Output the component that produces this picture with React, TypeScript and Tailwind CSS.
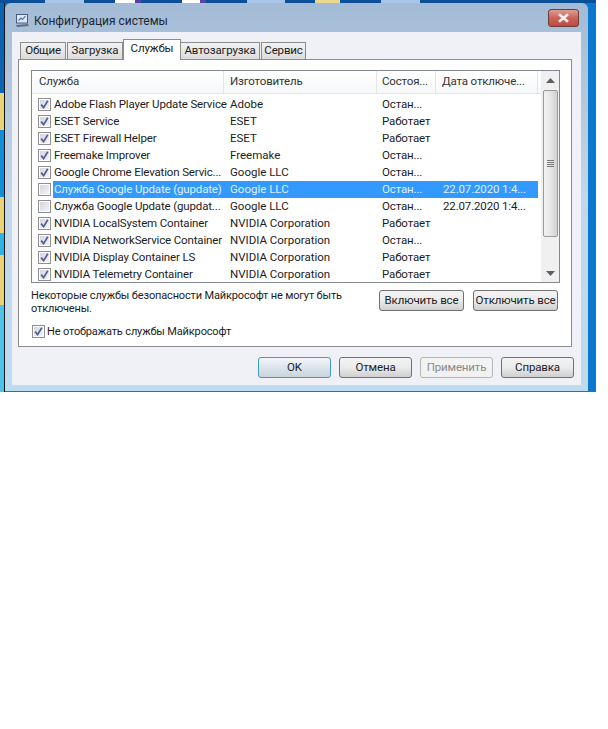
import React from "react";

const rows: [boolean, string, string, string, string, boolean?][] = [
  [true, "Adobe Flash Player Update Service", "Adobe", "Остан...", ""],
  [true, "ESET Service", "ESET", "Работает", ""],
  [true, "ESET Firewall Helper", "ESET", "Работает", ""],
  [true, "Freemake Improver", "Freemake", "Остан...", ""],
  [true, "Google Chrome Elevation Servic...", "Google LLC", "Остан...", ""],
  [false, "Служба Google Update (gupdate)", "Google LLC", "Остан...", "22.07.2020 1:4...", true],
  [false, "Служба Google Update (gupdat...", "Google LLC", "Остан...", "22.07.2020 1:4..."],
  [true, "NVIDIA LocalSystem Container", "NVIDIA Corporation", "Работает", ""],
  [true, "NVIDIA NetworkService Container", "NVIDIA Corporation", "Остан...", ""],
  [true, "NVIDIA Display Container LS", "NVIDIA Corporation", "Работает", ""],
  [true, "NVIDIA Telemetry Container", "NVIDIA Corporation", "Работает", ""],
];

function Check({ on }: { on: boolean }) {
  return (
    <div className="w-[13px] h-[13px] shrink-0 border border-[#8f8f92] bg-white p-px">
      <div className="w-full h-full bg-gradient-to-br from-[#d5d6dc] to-[#f4f4f6] flex items-center justify-center">
        {on && (
          <svg width="9" height="9" viewBox="0 0 9 9">
            <path d="M1.2 4.6 L3.6 7.6 L7.8 0.8" fill="none" stroke="#4d5f98" strokeWidth="1.7" />
          </svg>
        )}
      </div>
    </div>
  );
}

function Btn({ label, w, dis, def }: { label: string; w: string; dis?: boolean; def?: boolean }) {
  const cls = dis
    ? "border-[#b5b5b5] text-[#8a8a8a] from-[#f4f4f4] to-[#f0f0f0]"
    : def
      ? "border-[#3c9dbf] text-[#222] from-[#f2f6f9] to-[#c9d4dc]"
      : "border-[#707070] text-[#222] from-[#f4f4f4] via-[#ebebeb] to-[#cfcfcf]";
  return (
    <div className={`${w} h-[21px] shrink-0 rounded-[3px] border bg-gradient-to-b ${cls} flex items-center justify-center whitespace-nowrap`}>
      {label}
    </div>
  );
}

export default function App() {
  return (
    <div className="w-[608px] h-[729px] bg-white text-[11.5px] tracking-[-0.15px] leading-none text-[#1c1c1c] font-['Roboto','Noto_Sans',sans-serif]">
      <div className="w-[596px] h-[392px] flex flex-col bg-[#0a78cf]">
        {/* desktop strip above the window */}
        <div className="h-[3px] flex shrink-0 bg-[#0b4f96]">
          <div className="w-[45px]" />
          <div className="w-[39px] bg-[#a9c4ea]" />
          <div className="w-[31px]" />
          <div className="w-[20px] bg-white" />
          <div className="w-[6px] bg-[#5a3fa6]" />
          <div className="w-[41px]" />
          <div className="w-[18px] bg-white" />
          <div className="w-[6px] bg-[#5a3fa6]" />
          <div className="w-[41px]" />
          <div className="w-[38px] bg-[#a9c4ea]" />
          <div className="w-[30px]" />
          <div className="w-[25px] bg-[#e9d98e]" />
          <div className="w-[41px]" />
          <div className="w-[39px] bg-[#a9c4ea]" />
        </div>
        <div className="flex flex-1 min-h-0">
          {/* desktop strip to the left */}
          <div className="w-[5px] shrink-0 flex flex-col border-r border-[#111] bg-[#0f8fd8]">
            <div className="h-[90px] bg-[#0b63b4]" />
            <div className="h-[37px] bg-[#ecd277]" />
            <div className="h-[67px]" />
            <div className="h-[36px] bg-[#ecd277]" />
            <div className="h-[22px] bg-[#2cb4e6]" />
            <div className="h-[50px] bg-[#ecd277]" />
            <div className="flex-1 bg-[#4cc3ea]" />
          </div>
          {/* window */}
          <div className="w-[583px] h-[388px] shrink-0 rounded-t-[6px] bg-gradient-to-b from-[#a3bbd5] via-[#c3d6ea] to-[#bcdcf0] flex flex-col">
            {/* title bar */}
            <div className="h-[29px] shrink-0 flex items-center pl-[10px] pr-[9px] relative">
              <svg width="15" height="15" viewBox="0 0 15 15" className="shrink-0 mt-[6px]">
                <rect x="1.5" y="1.5" width="11" height="8.5" fill="#dfe9f5" stroke="#4a5a7c" />
                <path d="M3.5 7.5 L6 5 L7.5 6.5 L10.5 3.2" fill="none" stroke="#3d79c9" strokeWidth="1.2" />
                <path d="M1 12 L13 11 L14 13 L2 14 Z" fill="#5d6d90" />
              </svg>
              <span className="ml-[4px] mt-[6px] text-[12px] tracking-normal text-[#1d2733]">Конфигурация системы</span>
              <div className="ml-auto mt-[1px] w-[31px] h-[18px] rounded-[3px] border border-[#6e3a3a] bg-gradient-to-b from-[#dc9c92] via-[#c9645a] to-[#c24a3f] flex items-center justify-center">
                <svg width="13" height="10" viewBox="0 0 13 10">
                  <path d="M2 1.2 L11 8.8 M11 1.2 L2 8.8" stroke="#f6f0ee" strokeWidth="2.6" />
                </svg>
              </div>
            </div>
            {/* client area */}
            <div className="mx-[7px] h-[353px] bg-[#f0f1f6] px-[6px] pt-[7px] flex flex-col">
              {/* tabs */}
              <div className="h-[21px] shrink-0 flex items-end pl-[2px] relative z-10 -mb-px">
                {[
                  ["Общие", "w-[46px]"],
                  ["Загрузка", "w-[56px]"],
                  ["Службы", "w-[58px]"],
                  ["Автозагрузка", "w-[80px]"],
                  ["Сервис", "w-[45px]"],
                ].map(([t, w]) =>
                  t === "Службы" ? (
                    <div key={t} className={`${w} h-[21px] bg-white border border-b-0 border-[#8c8c8c] flex items-center justify-center pb-[2px] -mx-px relative z-10`}>
                      {t}
                    </div>
                  ) : (
                    <div key={t} className={`${w} h-[17px] mb-px mr-px bg-gradient-to-b from-[#f2f2f2] to-[#dcdcdc] border border-b-0 border-[#8c8c8c] flex items-center justify-center`}>
                      {t}
                    </div>
                  ),
                )}
              </div>
              {/* panel */}
              <div className="w-[554px] h-[288px] shrink-0 bg-white border border-[#8c8c8c] pl-[12px] pt-[10px]">
                {/* list */}
                <div className="w-[529px] h-[213px] border border-[#828790] flex overflow-hidden">
                  <div className="w-[509px] shrink-0 flex flex-col">
                    <div className="h-[23px] shrink-0 flex items-center border-b border-[#e5e5e5] bg-gradient-to-b from-white to-[#f7f8fa] text-[#333]">
                      <div className="w-[192px] pl-[7px] h-full flex items-center border-r border-[#e3e5e8]">Служба</div>
                      <div className="w-[153px] pl-[6px] h-full flex items-center border-r border-[#e3e5e8]">Изготовитель</div>
                      <div className="w-[59px] pl-[5px] h-full flex items-center border-r border-[#e3e5e8]">Состоя...</div>
                      <div className="w-[102px] pl-[6px] h-full flex items-center border-r border-[#e3e5e8]">Дата отключе...</div>
                    </div>
                    <div className="pt-[2px]">
                      {rows.map(([on, name, maker, state, date, sel]) => (
                        <div key={name + date} className="h-[17px] flex items-center">
                          <div className="w-[21px] shrink-0 pl-[6px]">
                            <Check on={on} />
                          </div>
                          <div className={`w-[485px] h-full flex items-center whitespace-nowrap ${sel ? "bg-[#3399ff] text-[#dff0ff]" : ""}`}>
                            <div className="w-[177px] pl-px">{name}</div>
                            <div className="w-[152px] tracking-normal">{maker}</div>
                            <div className="w-[61px]">{state}</div>
                            <div>{date}</div>
                          </div>
                        </div>
                      ))}
                    </div>
                  </div>
                  {/* scrollbar */}
                  <div className="flex-1 bg-[#f0f0f0] flex flex-col items-center pl-px">
                    <div className="h-[19px] shrink-0 flex items-center justify-center">
                      <svg width="9" height="5" viewBox="0 0 9 5"><path d="M4.5 0 L9 5 H0 Z" fill="#606060" /></svg>
                    </div>
                    <div className="w-[15px] h-[147px] shrink-0 rounded-[2px] border border-[#9a9a9a] bg-gradient-to-r from-[#f2f2f2] via-[#e6e6e6] to-[#d0d0d0] flex flex-col items-center justify-center gap-px">
                      <div className="w-[7px] h-px bg-[#7a7a7a]" />
                      <div className="w-[7px] h-px bg-[#7a7a7a]" />
                      <div className="w-[7px] h-px bg-[#7a7a7a]" />
                      <div className="w-[7px] h-px bg-[#7a7a7a]" />
                    </div>
                    <div className="flex-1 flex items-center justify-center pt-[28px]">
                      <svg width="9" height="5" viewBox="0 0 9 5"><path d="M0 0 H9 L4.5 5 Z" fill="#606060" /></svg>
                    </div>
                  </div>
                </div>
                {/* note and buttons */}
                <div className="flex mt-[7px] w-[527px]">
                  <p className="w-[330px] leading-[13px] -mt-px text-[11px]">
                    Некоторые службы безопасности Майкрософт не могут быть отключены.
                  </p>
                  <div className="ml-auto flex gap-[9px]">
                    <Btn label="Включить все" w="w-[85px]" />
                    <Btn label="Отключить все" w="w-[85px]" />
                  </div>
                </div>
                <div className="flex items-center mt-[10px] gap-[2px] pl-px text-[11px]">
                  <Check on={true} />
                  <span>Не отображать службы Майкрософт</span>
                </div>
              </div>
              {/* footer buttons */}
              <div className="flex justify-end gap-[8px] pt-[10px] w-[556px]">
                <Btn label="OK" w="w-[73px]" def />
                <Btn label="Отмена" w="w-[73px]" />
                <Btn label="Применить" w="w-[73px]" dis />
                <Btn label="Справка" w="w-[73px]" />
              </div>
            </div>
          </div>
        </div>
      </div>
    </div>
  );
}
